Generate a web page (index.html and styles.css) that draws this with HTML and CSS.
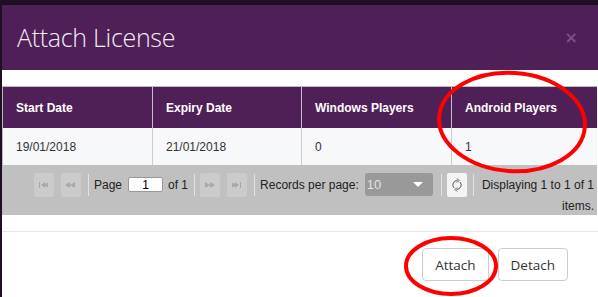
FILE: index.html
```html
<!DOCTYPE html>
<html lang="en">
  <head>
    <meta charset="UTF-8" />
    <title>Attach License</title>
    <link rel="stylesheet" href="styles.css">
  </head>
  <body>
    <div class="modal">
      <div class="modal-header">
        <h4 class="modal-title">Attach License</h4>
        <span class="close">×</span>
      </div>

      <div class="modal-body">
        <div class="grid">
          <table class="grid-table">
            <thead>
              <tr>
                <th class="col-start">Start Date</th>
                <th class="col-expiry">Expiry Date</th>
                <th class="col-win">Windows Players</th>
                <th>Android Players</th>
              </tr>
            </thead>
            <tbody>
              <tr>
                <td>19/01/2018</td>
                <td>21/01/2018</td>
                <td>0</td>
                <td>1</td>
              </tr>
            </tbody>
          </table>

          <div class="pager">
            <span class="pg-btn">
              <svg width="10" height="6" viewBox="0 0 10 6"><rect x="0" y="0" width="1" height="6" fill="#a8a8a8"/><path d="M2 3 L6 0 L6 6 Z M5 3 L9 0.5 L9 5.5 Z" fill="#a8a8a8"/></svg>
            </span>
            <span class="pg-btn">
              <svg width="12" height="6" viewBox="0 0 12 6"><path d="M0 3 L5 0 L5 6 Z M5 3 L10 0 L10 6 Z" fill="#a8a8a8"/></svg>
            </span>
            <span class="sep"></span>
            <span class="pg-text">Page</span>
            <input class="pg-input" type="text" value="1">
            <span class="pg-text">of 1</span>
            <span class="sep"></span>
            <span class="pg-btn">
              <svg width="12" height="6" viewBox="0 0 12 6"><path d="M1 0 L6 3 L1 6 Z M6 0 L11 3 L6 6 Z" fill="#a8a8a8"/></svg>
            </span>
            <span class="pg-btn">
              <svg width="10" height="6" viewBox="0 0 10 6"><path d="M0 0.5 L5 3 L0 5.5 Z M3 0 L7 3 L3 6 Z" fill="#a8a8a8"/><rect x="8" y="0" width="1" height="6" fill="#a8a8a8"/></svg>
            </span>
            <span class="sep"></span>
            <span class="pg-text">Records per page:</span>
            <span class="pg-select">
              <span>10</span>
              <svg width="10" height="6" viewBox="0 0 10 6"><path d="M0 0 L10 0 L5 5 Z" fill="#fff"/></svg>
            </span>
            <span class="sep"></span>
            <span class="pg-btn pg-refresh">
              <svg width="12" height="14" viewBox="0 0 12 14"><path d="M6.5 2.5 A4.5 4.5 0 0 0 3 10" fill="none" stroke="#555" stroke-width="1"/><path d="M5.5 11.5 A4.5 4.5 0 0 0 9 4" fill="none" stroke="#555" stroke-width="1"/><path d="M6 0.5 L8 2.5 L6 4.5" fill="none" stroke="#555" stroke-width="1"/><path d="M6 9.5 L4 11.5 L6 13.5" fill="none" stroke="#555" stroke-width="1"/></svg>
            </span>
            <span class="sep"></span>
            <span class="pg-info">Displaying 1 to 1 of 1 items.</span>
          </div>
        </div>
      </div>

      <div class="modal-footer">
        <button class="btn">Attach</button>
        <button class="btn">Detach</button>
      </div>
    </div>

    <!-- red marks drawn over the screenshot -->
    <svg class="marks" width="598" height="297" viewBox="0 0 598 297">
      <ellipse cx="512" cy="122" rx="73" ry="49" fill="none" stroke="#ff0000" stroke-width="4" transform="rotate(4 512 122)"/>
      <ellipse cx="451" cy="266" rx="45" ry="28" fill="none" stroke="#ff0000" stroke-width="4"/>
    </svg>
  </body>
</html>
```

FILE: styles.css
```css
body {
  margin: 0;
  padding: 5px 0 0 2px;
  overflow: hidden;
  background-color: #1e1022;
  font-family: "Liberation Sans", Arial, sans-serif;
}

.modal {
  width: 600px;
  height: 300px;
  background-color: #fff;
}

.modal-header {
  display: flex;
  align-items: center;
  justify-content: space-between;
  height: 65px;
  padding: 0 18px 0 15px;
  background-color: #4f1f57;
  box-sizing: border-box;
}

.modal-title {
  margin: 0 0 2px 0;
  font-family: "Open Sans", sans-serif;
  font-weight: 300;
  font-size: 25px;
  color: #f2eef3;
  letter-spacing: -0.3px;
}

.close {
  font-family: "DejaVu Sans", sans-serif;
  font-size: 16px;
  font-weight: bold;
  color: #7d4f86;
  margin-right: 6px;
}

.modal-body {
  padding: 16px 0 16px 0;
}

.grid {
  width: 594px;
  border-top: 1px solid #bbb;
  border-left: 1px solid #bbb;
}

.grid-table {
  width: 100%;
  border-collapse: collapse;
  font-size: 12px;
}

.grid-table th {
  height: 41px;
  padding: 0 0 0 13px;
  text-align: left;
  background-color: #4f1f57;
  color: #fff;
  font-weight: bold;
  border-right: 1px solid #c9bccb;
}

.grid-table th:last-child,
.grid-table td:last-child {
  border-right: none;
}

.col-start { width: 136px; }
.col-expiry { width: 135px; }
.col-win { width: 136px; }

.grid-table td {
  height: 37px;
  padding: 0 0 0 13px;
  background-color: #f7f8fa;
  color: #333;
  border-right: 1px solid #ccc;
}

.pager {
  display: flex;
  align-items: flex-start;
  height: 50px;
  padding: 8px 3px 0 31px;
  box-sizing: border-box;
  background-color: #c0c0c0;
  font-size: 12px;
  color: #222;
}

.pg-btn {
  display: flex;
  align-items: center;
  justify-content: center;
  width: 20px;
  height: 24px;
  margin-right: 7px;
  border-radius: 2px;
  background-color: #cbcbcb;
}

.pg-refresh {
  background-color: #f4f4f4;
  margin-right: 0;
}

.sep {
  width: 1px;
  height: 22px;
  margin: 1px 5px 0 0;
  background-color: #e2e2e2;
}

.pg-refresh + .sep {
  margin-left: 6px;
}

.pg-text {
  line-height: 24px;
  margin-right: 6px;
}

.pg-input {
  width: 35px;
  height: 15px;
  margin: 4px 5px 0 0;
  padding: 0;
  border: 1px solid #999;
  border-radius: 2px;
  box-sizing: border-box;
  text-align: center;
  font-family: "Liberation Sans", Arial, sans-serif;
  font-size: 12px;
}

.pg-select {
  display: flex;
  align-items: center;
  justify-content: space-between;
  width: 68px;
  height: 23px;
  margin-right: 8px;
  padding: 0 10px 0 2px;
  box-sizing: border-box;
  border-radius: 3px;
  background-color: #999;
  color: #e4e4e4;
  font-size: 13px;
}

.pg-info {
  flex: 1;
  text-align: right;
  line-height: 21px;
  margin-top: 2px;
}

.modal-footer {
  display: flex;
  justify-content: flex-end;
  gap: 9px;
  padding: 16px 34px 0 0;
  border-top: 1px solid #e5e5e5;
}

.btn {
  height: 33px;
  padding: 0 12px;
  border: 1px solid #ccc;
  border-radius: 4px;
  background-color: #fff;
  color: #333;
  font-family: "Open Sans", sans-serif;
  font-size: 13.5px;
}

.marks {
  position: absolute;
  top: 0;
  left: 0;
}
```
